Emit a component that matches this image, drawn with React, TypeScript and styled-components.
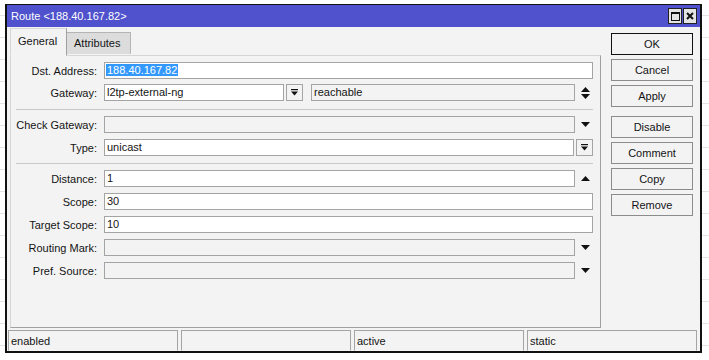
import styled, { createGlobalStyle } from "styled-components";

const GlobalStyle = createGlobalStyle`
  html, body {
    margin: 0;
    padding: 0;
  }
  body {
    height: 360px;
    overflow: hidden;
    background: #fff repeating-linear-gradient(to bottom, #fff 0 15px, #e4e4e4 15px 16px, #fff 16px 22px);
    font-family: "Liberation Sans", Arial, sans-serif;
    font-size: 11px;
    color: #141414;
  }
`;

type FieldProps = { $ro?: boolean; $w?: number };

function ComboIcon() {
  return (
    <svg width="7" height="7" viewBox="0 0 7 7">
      <rect x="0" y="0" width="7" height="1.2" fill="#111" />
      <polygon points="0,2.5 7,2.5 3.5,6.5" fill="#111" />
    </svg>
  );
}

function Arrow({ up }: { up?: boolean }) {
  return (
    <svg width="9" height="5" viewBox="0 0 9 5">
      <polygon points={up ? "0,5 9,5 4.5,0" : "0,0 9,0 4.5,5"} fill="#111" />
    </svg>
  );
}

function UpDown() {
  return (
    <svg width="9" height="12" viewBox="0 0 9 12">
      <polygon points="0,5 9,5 4.5,0" fill="#111" />
      <polygon points="0,7 9,7 4.5,12" fill="#111" />
    </svg>
  );
}

function App() {
  return (
    <>
      <GlobalStyle />
      <Page>
        <Window>
          <TitleBar>
            <span>Route &lt;188.40.167.82&gt;</span>
            <WinButtons>
              <WinButton>
                <MaxBox />
              </WinButton>
              <WinButton>
                <svg width="8" height="8" viewBox="0 0 8 8">
                  <path d="M1 1 L7 7 M7 1 L1 7" stroke="#111" strokeWidth="2" />
                </svg>
              </WinButton>
            </WinButtons>
          </TitleBar>

          <Main>
            <LeftCol>
              <TabStrip>
                <Tab $active $w={57}>General</Tab>
                <Tab $w={64}>Attributes</Tab>
              </TabStrip>
              <Panel>
                <Group $gap={5}>
                  <Row>
                    <Label>Dst. Address:</Label>
                    <Field>
                      <Selected>188.40.167.82</Selected>
                    </Field>
                  </Row>
                  <Row>
                    <Label>Gateway:</Label>
                    <Field $w={180}>l2tp-external-ng</Field>
                    <SmallBtn>
                      <ComboIcon />
                    </SmallBtn>
                    <Field $ro style={{ marginLeft: 8 }}>reachable</Field>
                    <Trail>
                      <UpDown />
                    </Trail>
                  </Row>
                </Group>
                <Separator $top={8} $bottom={6} />
                <Group $gap={6}>
                  <Row>
                    <Label>Check Gateway:</Label>
                    <Field $ro />
                    <Trail>
                      <Arrow />
                    </Trail>
                  </Row>
                  <Row>
                    <Label>Type:</Label>
                    <Field>unicast</Field>
                    <SmallBtn>
                      <ComboIcon />
                    </SmallBtn>
                  </Row>
                </Group>
                <Separator $top={7} $bottom={6} />
                <Group $gap={6}>
                  <Row>
                    <Label>Distance:</Label>
                    <Field>1</Field>
                    <Trail>
                      <Arrow up />
                    </Trail>
                  </Row>
                  <Row>
                    <Label>Scope:</Label>
                    <Field>30</Field>
                  </Row>
                  <Row>
                    <Label>Target Scope:</Label>
                    <Field>10</Field>
                  </Row>
                  <Row>
                    <Label>Routing Mark:</Label>
                    <Field $ro />
                    <Trail>
                      <Arrow />
                    </Trail>
                  </Row>
                  <Row>
                    <Label>Pref. Source:</Label>
                    <Field $ro />
                    <Trail>
                      <Arrow />
                    </Trail>
                  </Row>
                </Group>
              </Panel>
            </LeftCol>

            <ButtonCol>
              <ButtonGroup>
                <Button $default>OK</Button>
                <Button>Cancel</Button>
                <Button>Apply</Button>
              </ButtonGroup>
              <ButtonGroup>
                <Button>Disable</Button>
                <Button>Comment</Button>
                <Button>Copy</Button>
                <Button>Remove</Button>
              </ButtonGroup>
            </ButtonCol>
          </Main>

          <StatusBar>
            <StatusCell>enabled</StatusCell>
            <StatusCell />
            <StatusCell>active</StatusCell>
            <StatusCell>static</StatusCell>
          </StatusBar>
        </Window>
      </Page>
    </>
  );
}

const Page = styled.div`
  padding: 4px 0 0 5px;
`;

const Window = styled.div`
  width: 697px;
  height: 349px;
  box-sizing: border-box;
  border: 2px solid #111;
  border-top-width: 1px;
  background: #f3f3f3;
  display: flex;
  flex-direction: column;
`;

const TitleBar = styled.div`
  height: 22px;
  flex-shrink: 0;
  background: #4f52cc;
  color: #fff;
  display: flex;
  align-items: center;
  justify-content: space-between;
  padding: 0 3px 0 4px;
  font-size: 11px;
`;

const WinButtons = styled.div`
  display: flex;
  gap: 1px;
`;

const WinButton = styled.div`
  width: 14px;
  height: 16px;
  box-sizing: border-box;
  border: 1px solid #222;
  background: #e4e4e4;
  display: flex;
  align-items: center;
  justify-content: center;
`;

const MaxBox = styled.div`
  width: 9px;
  height: 9px;
  box-sizing: border-box;
  border: 1px solid #111;
  border-top-width: 2px;
`;

const Main = styled.div`
  flex: 1;
  display: flex;
  gap: 10px;
  padding: 1px 7px 1px 3px;
  min-height: 0;
`;

const LeftCol = styled.div`
  width: 591px;
  display: flex;
  flex-direction: column;
`;

const TabStrip = styled.div`
  height: 27px;
  display: flex;
  align-items: flex-end;
`;

const Tab = styled.div<{ $active?: boolean; $w: number }>`
  position: relative;
  z-index: 1;
  width: ${({ $w }) => $w}px;
  box-sizing: border-box;
  display: flex;
  align-items: center;
  padding: 0 0 0 7px;
  height: ${({ $active }) => ($active ? 28 : 22)}px;
  margin-bottom: ${({ $active }) => ($active ? -1 : 1)}px;
  background: ${({ $active }) => ($active ? "#f3f3f3" : "#dcdcdc")};
  border: 1px solid;
  border-color: ${({ $active }) =>
    $active ? "#d6d6d6 #a0a0a0 #f3f3f3 #d6d6d6" : "#b4b4b4 #b4b4b4 transparent #b4b4b4"};
  border-left-width: ${({ $active }) => ($active ? 1 : 0)}px;
  padding-bottom: ${({ $active }) => ($active ? 2 : 0)}px;
`;

const Panel = styled.div`
  flex: 1;
  box-sizing: border-box;
  border: 1px solid;
  border-color: #d6d6d6 #a0a0a0 #a0a0a0 #d6d6d6;
  padding: 6px 7px 0 5px;
  display: flex;
  flex-direction: column;
`;

const Group = styled.div<{ $gap: number }>`
  display: flex;
  flex-direction: column;
  gap: ${({ $gap }) => $gap}px;
`;

const Separator = styled.div<{ $top: number; $bottom: number }>`
  height: 1px;
  background: #c8c8c8;
  margin: ${({ $top }) => $top}px 0 ${({ $bottom }) => $bottom}px;
`;

const Row = styled.div`
  display: flex;
  align-items: center;
  height: 17px;
`;

const Label = styled.div`
  width: 81px;
  flex-shrink: 0;
  margin-right: 7px;
  text-align: right;
  white-space: nowrap;
`;

const Field = styled.div<FieldProps>`
  ${({ $w }) => ($w ? `width: ${$w}px; flex-shrink: 0;` : "flex: 1;")}
  height: 17px;
  box-sizing: border-box;
  border: 1px solid #a4a4a4;
  background: ${({ $ro }) => ($ro ? "#f3f3f3" : "#fff")};
  padding: 0 2px;
  line-height: 15px;
  white-space: nowrap;
  overflow: hidden;
`;

const Selected = styled.span`
  background: #3399ff;
  color: #fff;
  padding: 0 1px;
  margin-left: -1px;
`;

const SmallBtn = styled.div`
  width: 17px;
  height: 17px;
  flex-shrink: 0;
  box-sizing: border-box;
  margin-left: 2px;
  border: 1px solid #a4a4a4;
  background: #f3f3f3;
  display: flex;
  align-items: center;
  justify-content: center;
`;

const Trail = styled.div`
  width: 18px;
  flex-shrink: 0;
  display: flex;
  align-items: center;
  justify-content: center;
  padding-left: 2px;
  box-sizing: border-box;
`;

const ButtonCol = styled.div`
  width: 82px;
  padding-top: 5px;
  display: flex;
  flex-direction: column;
  gap: 9px;
`;

const ButtonGroup = styled.div`
  display: flex;
  flex-direction: column;
  gap: 4px;
`;

const Button = styled.div<{ $default?: boolean }>`
  height: 22px;
  box-sizing: border-box;
  border: 1px solid ${({ $default }) => ($default ? "#111" : "#8c8c8c")};
  background: #f3f3f3;
  display: flex;
  align-items: center;
  justify-content: center;
`;

const StatusBar = styled.div`
  height: 22px;
  flex-shrink: 0;
  box-sizing: border-box;
  padding: 1px 3px 0 1px;
  display: flex;
  gap: 3px;
`;

const StatusCell = styled.div`
  width: 170px;
  height: 21px;
  box-sizing: border-box;
  border: 1px solid;
  border-color: #a4a4a4 #a4a4a4 #f6f6f6 #a4a4a4;
  padding-left: 2px;
  display: flex;
  align-items: center;
`;

export default App;
